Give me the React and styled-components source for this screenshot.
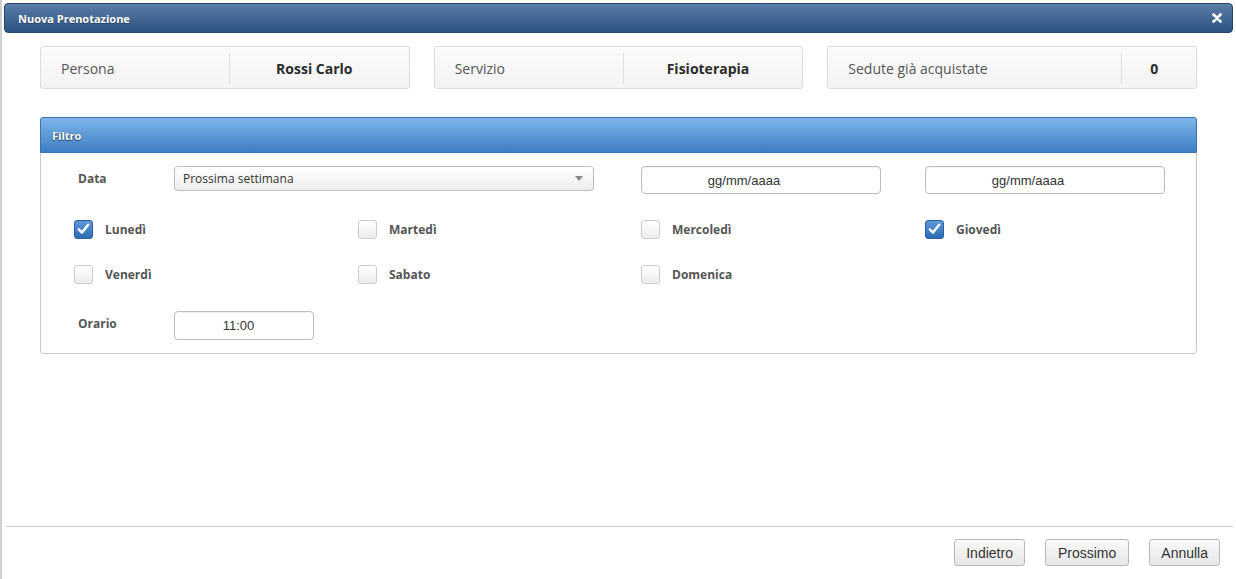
import React, { useState } from "react";
import styled, { createGlobalStyle } from "styled-components";

const GlobalStyle = createGlobalStyle`
  html, body {
    margin: 0;
    padding: 0;
    background: #fff;
  }
  body {
    font-family: "Open Sans", "Liberation Sans", sans-serif;
    color: #333;
  }
  * {
    box-sizing: border-box;
  }
`;

const Dialog = styled.div`
  width: 1236px;
  height: 579px;
  display: flex;
  flex-direction: column;
  border-left: 2px solid #cfcfcf;
  padding: 3px 3px 0 2px;
  background: #fff;
`;

const TitleBar = styled.div`
  height: 30px;
  flex: none;
  display: flex;
  align-items: center;
  justify-content: space-between;
  padding: 0 10px 0 13px;
  border: 1px solid #24466f;
  border-radius: 4px;
  background: linear-gradient(#5a7ea7, #2c5282);
  color: #fff;
  font-size: 11px;
  font-weight: 700;
  text-shadow: 0 1px 1px rgba(0, 0, 0, 0.35);
`;

const CloseButton = styled.span`
  display: flex;
  align-items: center;
  cursor: pointer;
`;

const Body = styled.div`
  flex: 1;
  padding: 13px 36px 0 36px;
`;

const InfoRow = styled.div`
  display: grid;
  grid-template-columns: repeat(3, 1fr);
  gap: 24px;
`;

const InfoBox = styled.div`
  height: 43px;
  display: flex;
  align-items: center;
  padding-top: 2px;
  border: 1px solid #dcdcdc;
  border-radius: 3px;
  background: linear-gradient(#fbfbfb, #f3f3f3);
`;

const InfoLabel = styled.div`
  width: ${(p) => p.$w || 189}px;
  height: 31px;
  display: flex;
  align-items: center;
  padding-left: 20px;
  border-right: 1px solid #dedede;
  font-size: 14px;
  color: #555;
`;

const InfoValue = styled.div`
  flex: 1;
  text-align: center;
  padding-right: 10px;
  font-size: 14px;
  font-weight: 700;
  color: #2b2b2b;
`;

const Panel = styled.div`
  margin-top: 28px;
  border: 1px solid #c8c8c8;
  border-radius: 3px;
`;

const PanelHeader = styled.div`
  height: 36px;
  display: flex;
  align-items: center;
  padding-left: 11px;
  margin: -1px -1px 0 -1px;
  border: 1px solid #3a73b3;
  border-radius: 3px 3px 0 0;
  background: linear-gradient(#7fb5ea, #3e7ec4);
  color: #fff;
  font-size: 11px;
  font-weight: 700;
  text-shadow: 0 1px 1px rgba(0, 0, 0, 0.55), 0 0 1px rgba(0, 0, 0, 0.4);
`;

const PanelBody = styled.div`
  padding: 13px 0 13px 33px;
`;

const Grid = styled.div`
  display: grid;
  grid-template-columns: 284px 283px 284px 1fr;
  align-items: ${(p) => p.$align || "center"};
  row-gap: ${(p) => p.$gap || 0}px;
  margin-top: ${(p) => p.$top || 0}px;
`;

const FieldGroup = styled.div`
  grid-column: span ${(p) => p.$span || 1};
  display: flex;
  align-items: center;
`;

const FieldLabel = styled.div`
  width: 100px;
  padding-left: 4px;
  padding-bottom: ${(p) => p.$pb || 0}px;
  font-size: 12px;
  font-weight: 700;
  color: #555;
`;

const SelectBox = styled.div`
  width: 420px;
  height: 25px;
  display: flex;
  align-items: center;
  justify-content: space-between;
  padding: 0 10px 0 8px;
  border: 1px solid #bdbdbd;
  border-radius: 4px;
  background: linear-gradient(#ffffff, #ececec);
  font-size: 12px;
  color: #333;
`;

const Caret = styled.span`
  width: 0;
  height: 0;
  border-left: 4px solid transparent;
  border-right: 4px solid transparent;
  border-top: 5px solid #8a8a8a;
`;

const TextInput = styled.div`
  width: ${(p) => p.$w}px;
  height: ${(p) => p.$h}px;
  display: flex;
  align-items: center;
  justify-content: center;
  padding-right: ${(p) => p.$pr || 0}px;
  border: 1px solid #bdbdbd;
  border-radius: 4px;
  background: #fff;
  box-shadow: inset 0 1px 1px rgba(0, 0, 0, 0.06);
  font-family: "Liberation Sans", Arial, sans-serif;
  font-size: 13px;
  color: #333;
`;

const CheckItem = styled.label`
  display: flex;
  align-items: center;
  gap: 12px;
  height: 20px;
  cursor: pointer;
  font-size: 12px;
  font-weight: 700;
  color: #555;
`;

const Box = styled.span`
  width: 19px;
  height: 19px;
  flex: none;
  display: flex;
  align-items: center;
  justify-content: center;
  border-radius: 3px;
  border: 1px solid ${(p) => (p.$on ? "#2b61a3" : "#cdcdcd")};
  background: ${(p) =>
    p.$on
      ? "linear-gradient(#5d98d8, #2e6cb4)"
      : "linear-gradient(#ffffff, #ececec)"};
`;

const Footer = styled.div`
  flex: none;
  height: 53px;
  display: flex;
  justify-content: flex-end;
  align-items: flex-start;
  gap: 20px;
  padding: 12px 13px 0 0;
  border-top: 1px solid #cccccc;
  margin-left: 2px;
`;

const Button = styled.button`
  height: 27px;
  padding: 0 ${(p) => p.$px || 11}px;
  border: 1px solid #b9b9b9;
  border-radius: 3px;
  background: linear-gradient(#fafafa, #e6e6e6);
  font-family: "Liberation Sans", Arial, sans-serif;
  font-size: 14px;
  color: #333;
  cursor: pointer;
`;

const days = [
  ["Lunedì", true],
  ["Martedì", false],
  ["Mercoledì", false],
  ["Giovedì", true],
  ["Venerdì", false],
  ["Sabato", false],
  ["Domenica", false],
];

function Check({ label, initial }) {
  const [on, setOn] = useState(initial);
  return (
    <CheckItem onClick={() => setOn(!on)}>
      <Box $on={on}>
        {on && (
          <svg width="13" height="12" viewBox="0 0 13 12">
            <path
              d="M1.8 6.4 L5 9.6 L11.2 1.8"
              fill="none"
              stroke="#fff"
              strokeWidth="2.4"
              strokeLinecap="round"
              strokeLinejoin="round"
            />
          </svg>
        )}
      </Box>
      {label}
    </CheckItem>
  );
}

export default function App() {
  return (
    <>
      <GlobalStyle />
      <Dialog>
        <TitleBar>
          Nuova Prenotazione
          <CloseButton>
            <svg width="10" height="10" viewBox="0 0 10 10">
              <path
                d="M1.5 1.5 L8.5 8.5 M8.5 1.5 L1.5 8.5"
                stroke="#fff"
                strokeWidth="2.6"
                strokeLinecap="round"
              />
            </svg>
          </CloseButton>
        </TitleBar>

        <Body>
          <InfoRow>
            <InfoBox>
              <InfoLabel>Persona</InfoLabel>
              <InfoValue>Rossi Carlo</InfoValue>
            </InfoBox>
            <InfoBox>
              <InfoLabel>Servizio</InfoLabel>
              <InfoValue>Fisioterapia</InfoValue>
            </InfoBox>
            <InfoBox>
              <InfoLabel $w={294}>Sedute già acquistate</InfoLabel>
              <InfoValue>0</InfoValue>
            </InfoBox>
          </InfoRow>

          <Panel>
            <PanelHeader>Filtro</PanelHeader>
            <PanelBody>
              <Grid $align="start">
                <FieldGroup $span={2}>
                  <FieldLabel>Data</FieldLabel>
                  <SelectBox>
                    Prossima settimana
                    <Caret />
                  </SelectBox>
                </FieldGroup>
                <FieldGroup>
                  <TextInput $w={240} $h={28} $pr={34}>
                    gg/mm/aaaa
                  </TextInput>
                </FieldGroup>
                <FieldGroup>
                  <TextInput $w={240} $h={28} $pr={34}>
                    gg/mm/aaaa
                  </TextInput>
                </FieldGroup>
              </Grid>

              <Grid $top={25} $gap={25}>
                {days.map(([d, on]) => (
                  <Check key={d} label={d} initial={on} />
                ))}
              </Grid>

              <Grid $top={27}>
                <FieldGroup $span={2}>
                  <FieldLabel $pb={5}>Orario</FieldLabel>
                  <TextInput $w={140} $h={29} $pr={11}>
                    11:00
                  </TextInput>
                </FieldGroup>
              </Grid>
            </PanelBody>
          </Panel>
        </Body>

        <Footer>
          <Button>Indietro</Button>
          <Button $px={12}>Prossimo</Button>
          <Button $px={11}>Annulla</Button>
        </Footer>
      </Dialog>
    </>
  );
}
